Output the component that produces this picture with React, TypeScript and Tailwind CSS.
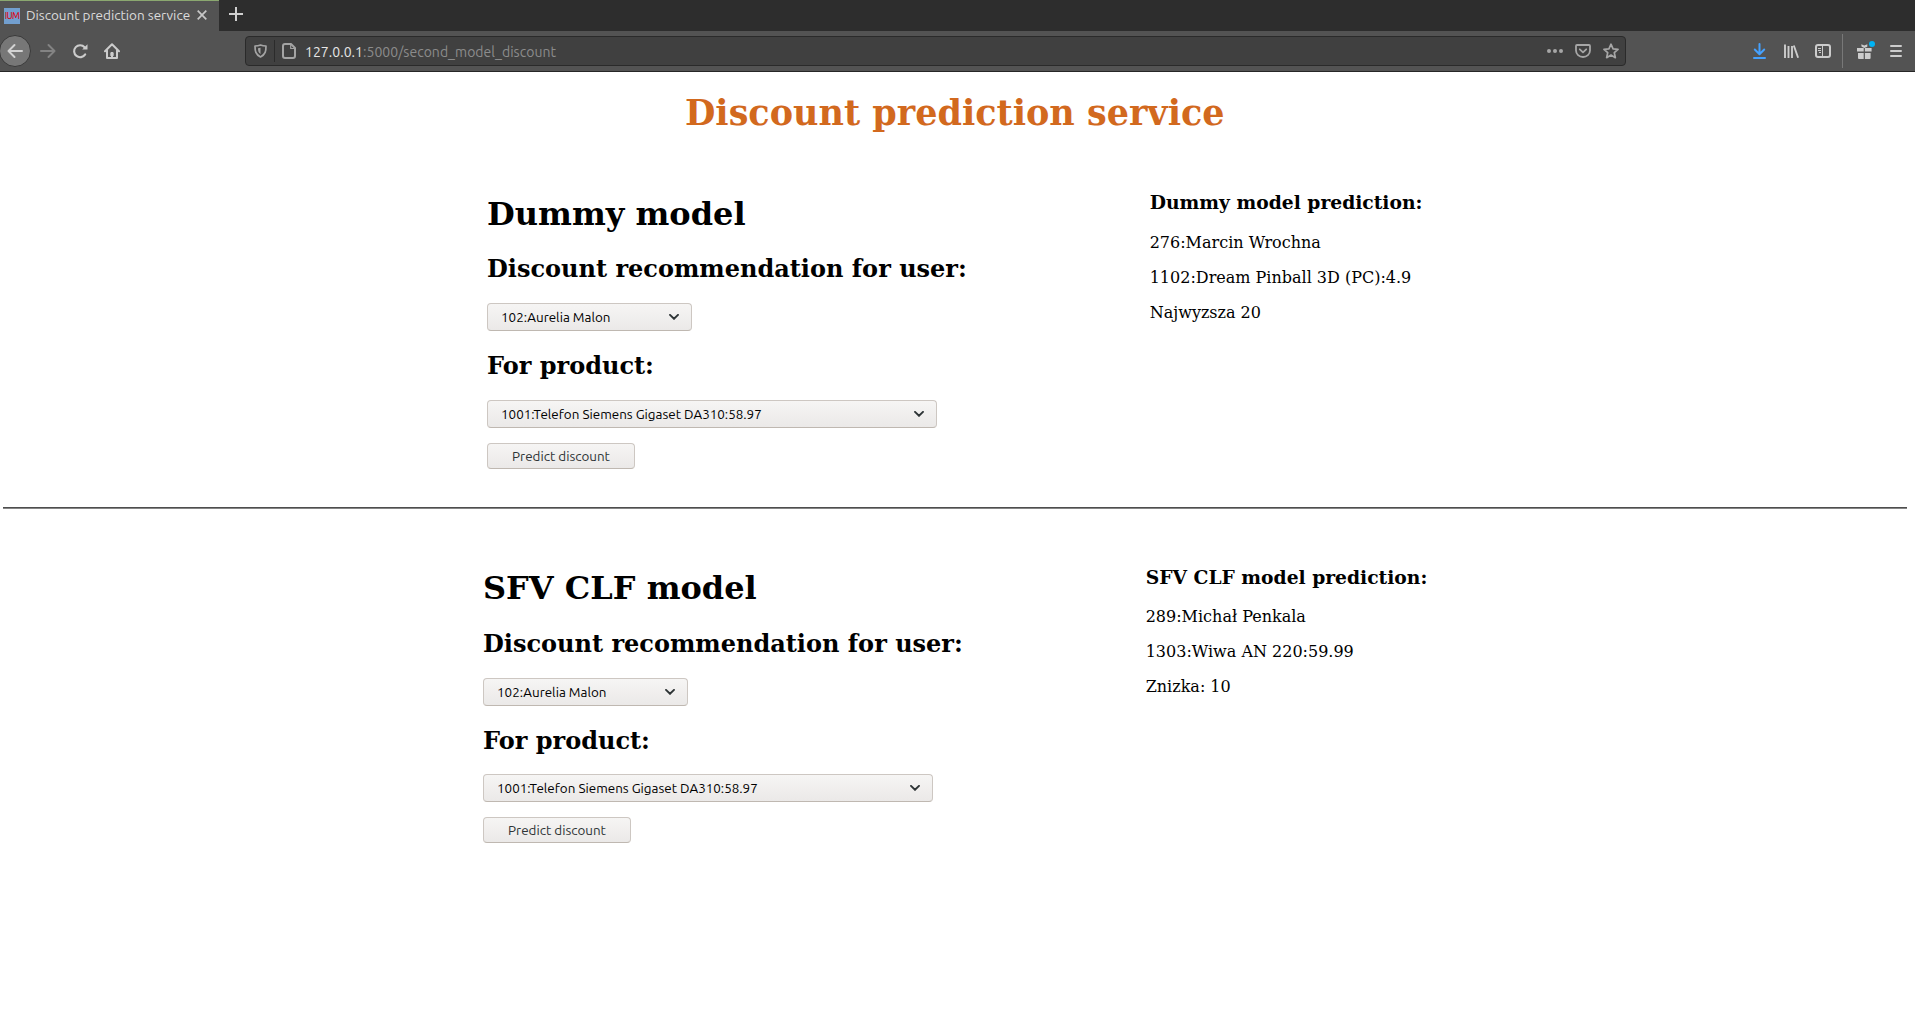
import React from "react";

const uiFont = "font-['Ubuntu','Noto_Sans','Open_Sans',sans-serif]";

function TabStrip() {
  return (
    <div className="flex h-[31px] bg-[#2d2d2d]">
      <div className="flex h-full w-[219px] shrink-0 items-center border-t border-[#8ba870] bg-[#535353] pl-1">
        <span className="-mt-px flex h-4 w-4 shrink-0 items-center justify-center bg-[#729fcf] text-[9px] leading-4 font-medium tracking-[-0.7px] text-[#d5101c]">
          IUM
        </span>
        <span className="-mt-[2px] ml-[6px] w-[171px] shrink-0 whitespace-nowrap text-[13.5px] leading-4 text-[#dcdcdc]">
          Discount prediction service
        </span>
        <svg className="-mt-[2px]" width="10" height="10" viewBox="0 0 10 10" stroke="#c8c8c8" strokeWidth="1.7">
          <path d="M.7.7l8.6 8.6M9.3.7L.7 9.3" />
        </svg>
      </div>
      <div className="flex w-[34px] items-center justify-center">
        <svg width="14" height="14" viewBox="0 0 14 14" className="-mt-[3px]" stroke="#cfcfcf" strokeWidth="2">
          <path d="M7 0v14M0 7h14" />
        </svg>
      </div>
    </div>
  );
}

function Toolbar() {
  return (
    <div className="flex h-[41px] items-center border-b border-[#262626] bg-[#535353]">
      <div className="-ml-px flex size-8 shrink-0 items-center justify-center rounded-full border border-[#3a3a3a] bg-[#777777]">
        <svg width="16" height="16" viewBox="0 0 16 16" fill="none" stroke="#d2d2d2" strokeWidth="2" strokeLinecap="round" strokeLinejoin="round">
          <path d="M15 8H1.5M7.5 2l-6 6 6 6" />
        </svg>
      </div>
      <svg className="ml-[9px] shrink-0" width="16" height="16" viewBox="0 0 16 16" fill="none" stroke="#838383" strokeWidth="2" strokeLinecap="round" strokeLinejoin="round">
        <path d="M1 8h13.5M8.500 2l6 6-6 6" />
      </svg>
      <svg className="ml-4 shrink-0" width="17" height="16" viewBox="0 0 17 16" fill="none" stroke="#cccccc" strokeWidth="2.1" strokeLinecap="round">
        <path d="M13.2 11.4A6 6 0 1 1 12.600 4.200" />
        <path d="M15.500 1.200v5.300h-5.300z" fill="#cccccc" stroke="none" />
      </svg>
      <svg className="ml-[15px] shrink-0" width="16" height="16" viewBox="0 0 16 16" fill="none" stroke="#cccccc" strokeWidth="2" strokeLinecap="round" strokeLinejoin="round">
        <path d="M1 8.200l7-7 7 7M3 7.500V15h10V7.500" />
        <path d="M7 9h2v5H7z" fill="#cccccc" stroke="none" />
        <path d="M6.800 12.500V9.700h2.400v2.800" strokeWidth="1" />
      </svg>

      <div className="ml-[125px] flex h-[30px] w-[1381px] shrink-0 items-center rounded-[4px] border border-[#2a2a2a] bg-[#404040] pl-2">
        <svg className="shrink-0" width="13" height="14" viewBox="0 0 13 14" fill="none" stroke="#a4a4a4" strokeWidth="1.7" strokeLinejoin="round">
          <path d="M6.500 1C4.800 1.700 3 2 1 2c0 5 .5 8.500 5.500 11C11.500 10.500 12 7 12 2 10 2 8.200 1.700 6.500 1z" />
          <path d="M6.500 3.800v6.300C4.500 8.700 4 7 4 4.300c1 0 1.700-.2 2.500-.5z" fill="#a4a4a4" stroke="none" />
        </svg>
        <span className="ml-[7px] h-[22px] w-px bg-[#2b2b2b]" />
        <svg className="ml-[7px] shrink-0" width="14" height="16" viewBox="0 0 14 16" fill="none" stroke="#a4a4a4" strokeWidth="2" strokeLinejoin="round">
          <path d="M3 1h6l4 4v8a2 2 0 0 1-2 2H3a2 2 0 0 1-2-2V3a2 2 0 0 1 2-2z" />
          <path d="M8.700 1.500v4h4" strokeWidth="1.200" />
        </svg>
        <span className="mt-[2px] ml-[9px] whitespace-nowrap text-[14px] leading-5 tracking-[0.03px] text-[#8c8c8c]">
          <span className="text-[#e6e6e6]">127.0.0.1</span>:5000/second_model_discount
        </span>
        <div className="ml-auto flex items-center pr-[6px]">
          <svg width="16" height="16" viewBox="0 0 16 16" fill="#a6a6a6">
            <circle cx="2" cy="8" r="2" /><circle cx="8" cy="8" r="2" /><circle cx="14" cy="8" r="2" />
          </svg>
          <svg className="ml-3" width="16" height="16" viewBox="0 0 16 16" fill="none" stroke="#a6a6a6" strokeWidth="1.800" strokeLinecap="round" strokeLinejoin="round">
            <path d="M2 2h12a1 1 0 0 1 1 1v4.500a7 6.500 0 0 1-14 0V3a1 1 0 0 1 1-1z" />
            <path d="M4.800 6.300L8 9.300l3.200-3" />
          </svg>
          <svg className="ml-3" width="16" height="16" viewBox="0 0 16 16" fill="none" stroke="#a6a6a6" strokeWidth="1.700" strokeLinejoin="round">
            <path d="M8 1.200l2.050 4.600 5 .5-3.750 3.400 1.050 4.950L8 12.100l-4.350 2.550L4.700 9.700.95 6.300l5-.5z" />
          </svg>
        </div>
      </div>

      <div className="ml-auto flex items-center pr-[13px]">
        <svg width="13" height="16" viewBox="0 0 13 16" fill="none" stroke="#45a1ff" strokeWidth="2" strokeLinecap="round" strokeLinejoin="round">
          <path d="M6.500 1v10M1.800 6.500l4.700 4.700 4.700-4.700M1 15h11" />
        </svg>
        <svg className="ml-[17px]" width="16" height="16" viewBox="0 0 16 16" fill="none" stroke="#cccccc" strokeWidth="1.900">
          <path d="M2 1.500V15M5.500 3V15M9 3V15M10.800 2.500l4.300 12.300" />
        </svg>
        <svg className="ml-4" width="16" height="16" viewBox="0 0 16 16" fill="none" stroke="#cccccc">
          <rect x="1" y="2" width="14" height="12" rx="2" strokeWidth="2" />
          <path d="M7.500 2v12" strokeWidth="1" />
          <path d="M3 5.500h3M3 7.500h3M4 9.500h2" strokeWidth="1" />
        </svg>
        <span className="ml-[11px] h-[34px] w-px bg-[#787878]" />
        <div className="relative ml-[14px]">
          <svg width="15" height="16" viewBox="0 0 15 16" fill="#cccccc">
            <path d="M0 5h6.700v3.500H0zM7.900 5h6.700v3.500H7.900zM1 10h5.700v6H2a1 1 0 0 1-1-1zM7.900 10h5.700v5a1 1 0 0 1-1 1H7.900zM4.300 1.200L7.300 2.400l3-1.200v2.500L7.300 5 4.500 3.500z" />
          </svg>
          <span className="absolute -top-[2px] left-[12px] size-[6px] rounded-full bg-[#00b3f4]" />
        </div>
        <svg className="ml-[18px]" width="12" height="16" viewBox="0 0 12 16" stroke="#cccccc" strokeWidth="2" strokeLinecap="round">
          <path d="M1 3h10M1 8h10M1 13h10" />
        </svg>
      </div>
    </div>
  );
}

function SelectBox({ label, wide }: { label: string; wide?: boolean }) {
  return (
    <div
      className={`${uiFont} ${wide ? "w-[450px]" : "w-[205px]"} flex h-7 items-center justify-between rounded-[4px] border border-[#cdc7c2] border-b-[#bfb8b1] bg-linear-to-b from-[#f6f5f4] to-[#ebe9e8] pr-[12px] pl-[13px] text-[13.43px] text-black`}
    >
      <span className="whitespace-nowrap leading-4">{label}</span>
      <svg width="10" height="6" viewBox="0 0 10 6" fill="none" stroke="#2e3436" strokeWidth="1.900" strokeLinecap="round">
        <path d="M1 .9l4 3.900L9 .9" />
      </svg>
    </div>
  );
}

type ModelProps = {
  title: string;
  prediction: string[];
  className: string;
  userTop: string;
  productSelectTop: string;
  resultOffset: string;
  resultTop: string;
};

function ModelSection({ title, prediction, className, userTop, productSelectTop, resultOffset, resultTop }: ModelProps) {
  return (
    <section className={`flex ${className}`}>
      <div className="w-[662.7px] shrink-0">
        <h1 className="text-[32px] leading-[38px] font-bold">{title}</h1>
        <h2 className={`${userTop} text-[24px] leading-7 font-bold`}>Discount recommendation for user:</h2>
        <div className="mt-5"><SelectBox label="102:Aurelia Malon" /></div>
        <h2 className="mt-[21px] text-[24px] leading-7 font-bold">For product:</h2>
        <div className={productSelectTop}><SelectBox label="1001:Telefon Siemens Gigaset DA310:58.97" wide /></div>
        <button className={`${uiFont} mt-[15px] block h-[26px] w-[148px] rounded-[4px] border border-[#cdc7c2] border-b-[#bfb8b1] bg-linear-to-b from-[#f6f5f4] to-[#ebe9e8] text-[13.43px] leading-4 text-[#2e3436]`}>
          Predict discount
        </button>
      </div>
      <div className={`${resultOffset} whitespace-nowrap`}>
        <h3 className="text-[18.72px] leading-[22px] font-bold">{title} prediction:</h3>
        <div className={`${resultTop} flex flex-col gap-4 text-[16px] leading-[19px]`}>
          {prediction.map((line) => <p key={line}>{line}</p>)}
        </div>
      </div>
    </section>
  );
}

export default function App() {
  return (
    <div className="h-[1010px] w-[1915px] overflow-hidden bg-white">
      <header className={uiFont}>
        <TabStrip />
        <Toolbar />
      </header>
      <main className="font-['DejaVu_Serif',serif] text-black">
        <h1 className="mt-[17px] pl-[685px] text-[35px] leading-[48px] font-bold whitespace-nowrap text-[#d2691e]">
          Discount prediction service
        </h1>
        <ModelSection
          title="Dummy model"
          prediction={["276:Marcin Wrochna", "1102:Dream Pinball 3D (PC):4.9", "Najwyzsza 20"]}
          className="mt-[58px] pl-[487px]"
          userTop="mt-[22px]"
          productSelectTop="mt-5"
          resultOffset="-mt-1"
          resultTop="mt-5"
        />
        <div className="mt-[38px] mr-2 ml-[3px] h-[2px] border-t border-[#4e4e4e] bg-[#858585]" />
        <ModelSection
          title="SFV CLF model"
          prediction={["289:Michał Penkala", "1303:Wiwa AN 220:59.99", "Znizka: 10"]}
          className="mt-[60px] pl-[483px]"
          userTop="mt-[23px]"
          productSelectTop="mt-[19px]"
          resultOffset="-mt-[3px]"
          resultTop="mt-[19px]"
        />
      </main>
    </div>
  );
}
